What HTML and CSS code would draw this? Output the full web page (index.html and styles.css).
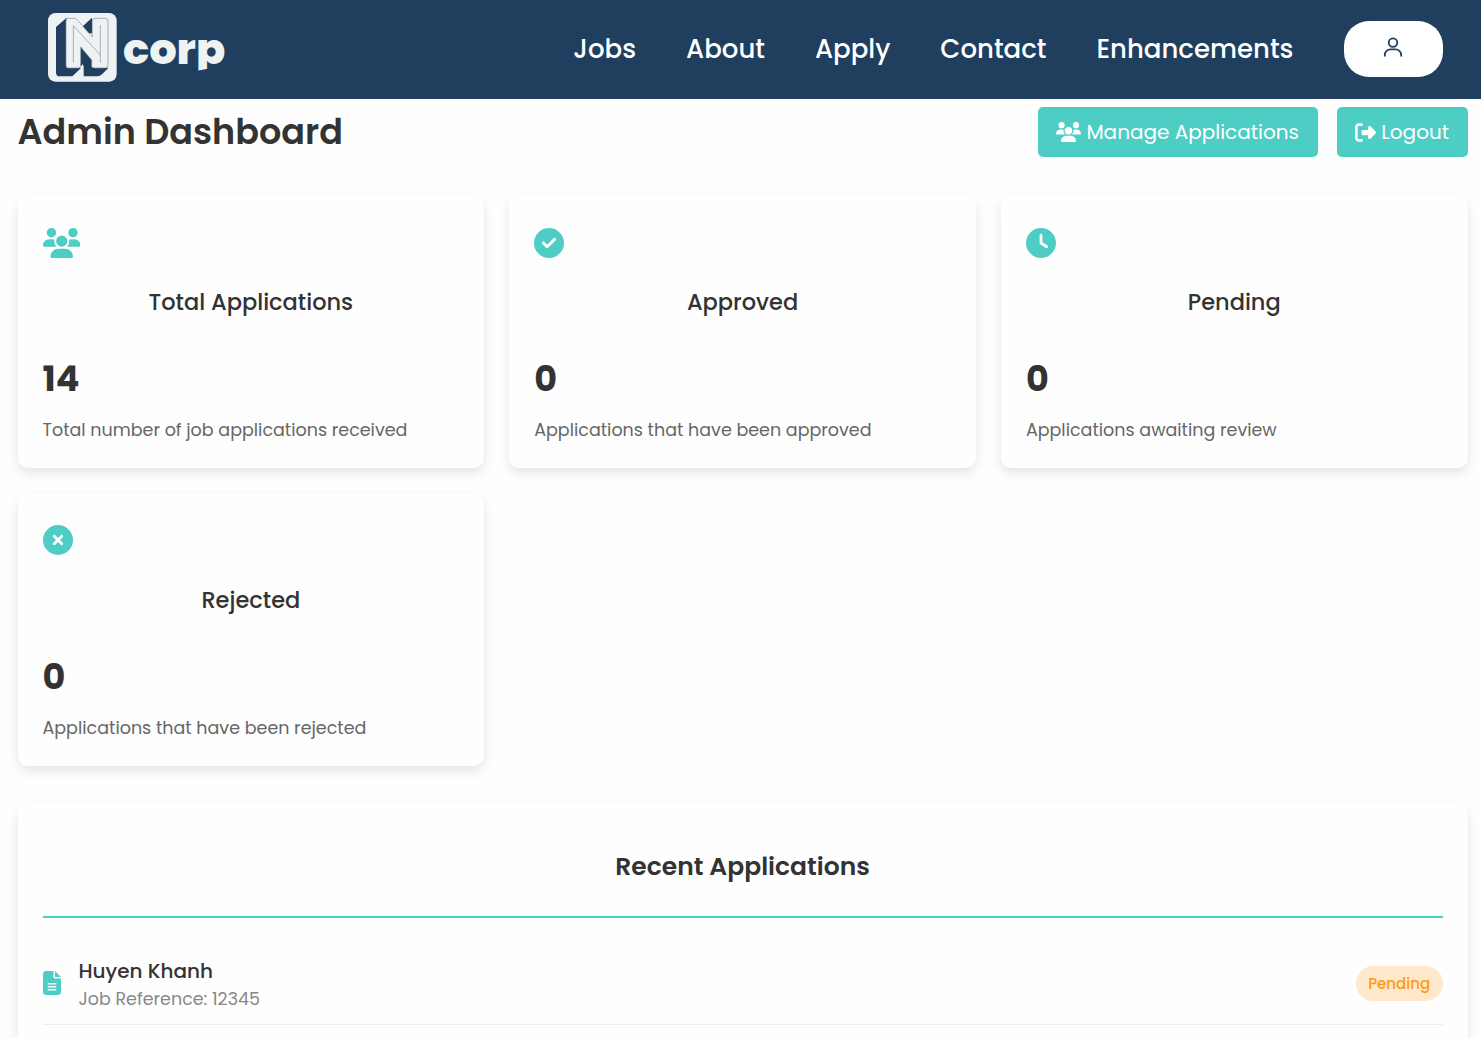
FILE: index.html
```html
<!DOCTYPE html>
<html lang="en">
<head>
<meta charset="utf-8">
<title>Admin Dashboard</title>
<link rel="stylesheet" href="styles.css">
</head>
<body>
<header class="topbar">
  <a class="logo" href="#">
    <svg class="logo-svg" viewBox="24 24 532 208" role="img" aria-label="N corp">
      <clipPath id="descender"><path d="M240 80H570V182L500 192 468 198H240Z"/></clipPath>
      <rect class="light" x="24" y="24" width="206" height="206" rx="22"/>
      <path class="dark" d="M80 38 48 66V203Q48 214 60 214H97L123 189H80ZM128 64 156 38V84L145 86ZM131 180V214H172Q180 214 186 208L205 189Z"/>
      <path class="dark" d="M120 104 160 150V189H134L128 178 120 186Z"/>
      <path class="light outline" d="M84 40H102Q107 40 111 44L157 96V48Q157 40 165 40H196Q204 40 204 48V181Q204 189 196 189H164Q158 189 155 185V165L122 126V181Q122 189 114 189H86Q78 189 78 181V48Q78 40 84 40Z"/>
      <path class="outline none" d="M100 173V62L181 150M181 60V173"/>
      <text class="logo-text" x="249" y="177" textLength="307" lengthAdjust="spacingAndGlyphs" clip-path="url(#descender)">corp</text>
    </svg>
  </a>
  <nav class="nav">
    <a href="#">Jobs</a>
    <a href="#">About</a>
    <a href="#">Apply</a>
    <a href="#">Contact</a>
    <a href="#">Enhancements</a>
  </nav>
  <a class="account" href="#" aria-label="Account">
    <svg width="20" height="20" viewBox="0 0 20 20"><circle cx="10" cy="5.6" r="4.3"/><path d="M1.8 19.5V18A5.6 5.6 0 0 1 7.4 12.4H12.6A5.6 5.6 0 0 1 18.2 18V19.5"/></svg>
  </a>
</header>
<main class="page">
  <div class="heading">
    <h1>Admin Dashboard</h1>
    <div class="actions">
      <a class="btn" href="#"><svg width="25" height="20" viewBox="0 0 640 512"><use href="#users"/></svg>Manage Applications</a>
      <a class="btn" href="#"><svg width="21" height="21" viewBox="0 0 512 512"><path d="M377.9 105.9 500.7 228.7c7.2 7.2 11.3 17.1 11.3 27.3s-4.1 20.1-11.3 27.3L377.9 406.1c-6.4 6.4-15 9.9-24 9.9c-18.7 0-33.9-15.2-33.9-33.9V320H192c-17.7 0-32-14.3-32-32v-64c0-17.7 14.3-32 32-32h128v-62.1c0-18.7 15.2-33.9 33.9-33.9c9 0 17.6 3.6 24 9.9zM160 96H96c-17.7 0-32 14.3-32 32v256c0 17.7 14.3 32 32 32h64c17.7 0 32 14.3 32 32s-14.3 32-32 32H96c-53 0-96-43-96-96V128C0 75 43 32 96 32h64c17.7 0 32 14.3 32 32s-14.3 32-32 32z"/></svg>Logout</a>
    </div>
  </div>
  <section class="stats">
    <article class="card">
      <svg class="wide" viewBox="0 0 640 512"><path id="users" d="M144 0a80 80 0 1 1 0 160A80 80 0 1 1 144 0zM512 0a80 80 0 1 1 0 160A80 80 0 1 1 512 0zM0 298.7C0 239.8 47.8 192 106.7 192h42.7c15.9 0 31 3.5 44.6 9.7c-1.3 7.2-1.9 14.7-1.9 22.3c0 38.2 16.8 72.5 43.3 96H21.3C9.6 320 0 310.4 0 298.7zM405.3 320c26.6-23.5 42.7-57.8 42.7-96c0-7.6-.7-15-1.9-22.3c13.6-6.3 28.7-9.7 44.6-9.7h42.7C592.2 192 640 239.8 640 298.7c0 11.8-9.6 21.3-21.3 21.3H405.3zM224 224a96 96 0 1 1 192 0 96 96 0 1 1-192 0zM128 485.3C128 411.7 187.7 352 261.3 352H378.7C452.3 352 512 411.7 512 485.3c0 14.7-11.9 26.7-26.7 26.7H154.7c-14.7 0-26.7-11.9-26.7-26.7z"/></svg>
      <h2>Total Applications</h2>
      <strong>14</strong>
      <p>Total number of job applications received</p>
    </article>
    <article class="card">
      <svg viewBox="0 0 512 512"><path d="M256 512A256 256 0 1 0 256 0a256 256 0 1 0 0 512zM369 209 241 337c-9.4 9.4-24.6 9.4-33.9 0l-64-64c-9.4-9.4-9.4-24.6 0-33.9s24.6-9.4 33.9 0l47 47L335 175c9.4-9.4 24.6-9.4 33.9 0s9.4 24.6 0 33.9z"/></svg>
      <h2>Approved</h2>
      <strong>0</strong>
      <p>Applications that have been approved</p>
    </article>
    <article class="card">
      <svg viewBox="0 0 512 512"><path d="M256 0a256 256 0 1 1 0 512A256 256 0 1 1 256 0zM232 120V256c0 8 4 15.5 10.7 20l96 64c11 7.4 25.9 4.4 33.3-6.7s4.4-25.9-6.7-33.3L280 243.2V120c0-13.3-10.7-24-24-24s-24 10.7-24 24z"/></svg>
      <h2>Pending</h2>
      <strong>0</strong>
      <p>Applications awaiting review</p>
    </article>
    <article class="card">
      <svg viewBox="0 0 512 512"><path d="M256 512A256 256 0 1 0 256 0a256 256 0 1 0 0 512zM175 175c9.4-9.4 24.6-9.4 33.9 0l47 47 47-47c9.4-9.4 24.6-9.4 33.9 0s9.4 24.6 0 33.9l-47 47 47 47c9.4 9.4 9.4 24.6 0 33.9s-24.6 9.4-33.9 0l-47-47-47 47c-9.4 9.4-24.6 9.4-33.9 0s-9.4-24.6 0-33.9l47-47-47-47c-9.4-9.4-9.4-24.6 0-33.9z"/></svg>
      <h2>Rejected</h2>
      <strong>0</strong>
      <p>Applications that have been rejected</p>
    </article>
  </section>
  <section class="recent">
    <h2>Recent Applications</h2>
    <div class="row">
      <svg width="18" height="24" viewBox="0 0 384 512"><path d="M64 0C28.7 0 0 28.7 0 64V448c0 35.3 28.7 64 64 64H320c35.3 0 64-28.7 64-64V160H256c-17.7 0-32-14.3-32-32V0H64zM256 0V128H384L256 0zM112 256H272c8.8 0 16 7.2 16 16s-7.2 16-16 16H112c-8.8 0-16-7.2-16-16s7.2-16 16-16zm0 64H272c8.8 0 16 7.2 16 16s-7.2 16-16 16H112c-8.8 0-16-7.2-16-16s7.2-16 16-16zm0 64H272c8.8 0 16 7.2 16 16s-7.2 16-16 16H112c-8.8 0-16-7.2-16-16s7.2-16 16-16z"/></svg>
      <div class="who">
        <h3>Huyen Khanh</h3>
        <p>Job Reference: 12345</p>
      </div>
      <span class="badge">Pending</span>
    </div>
  </section>
</main>
</body>
</html>
```
FILE: styles.css
```css
* { box-sizing: border-box; }
html { height: 100%; overflow: hidden; }
body { display: flex; flex-direction: column; height: 100%; margin: 0; overflow: hidden; background: #fefefe; color: #333; font-family: Poppins, Inter, sans-serif; }
h1, h2, h3, p { margin: 0; }
a { color: inherit; text-decoration: none; }
svg { display: block; flex: none; fill: currentColor; }

.topbar { display: flex; flex: none; align-items: center; height: 99px; padding: 0 38px 2px 48px; background: #203e5d; color: #fff; }
.logo-svg { width: 177.3px; height: 69.3px; margin-top: -2px; overflow: visible; }
.light { fill: #eef2f3; }
.dark { fill: #203e5d; }
.outline { stroke: #7d8fa3; stroke-width: 2; }
.none { fill: none; }
.logo-text { fill: #eef2f3; font: 800 128px Poppins, Lato, sans-serif; }
.nav { display: flex; gap: 50px; margin-left: auto; font-size: 26px; font-weight: 500; line-height: 40px; }
.account { display: flex; align-items: center; justify-content: center; width: 99px; height: 56px; margin-left: 50.5px; border-radius: 25px; background: #fff; color: #203e5d; }
.account svg { margin: -4px 1px 0 0; fill: none; stroke: currentColor; stroke-width: 1.8; }

.page { display: flex; flex: 1; flex-direction: column; min-height: 0; padding: 8px 13.4px 0 17.5px; }
.heading { display: flex; flex: none; justify-content: space-between; height: 50px; }
h1 { font-size: 35px; font-weight: 600; line-height: 50px; }
.actions { display: flex; gap: 19px; }
.btn { display: flex; align-items: center; gap: 5px; height: 50px; padding: 0 18.6px; border-radius: 5px; background: #4ecdc4; color: #fff; font-size: 20px; }

.stats { display: grid; flex: none; grid-template-columns: repeat(3, 1fr); gap: 25px; margin-top: 38.6px; }
.card { height: 272.7px; padding: 32px 25px 0; border-radius: 10px; background: #fefefe; box-shadow: 0 5px 12px rgba(0, 0, 0, .1); }
.card svg { width: 30px; height: 30px; color: #4ecdc4; }
.card svg.wide { width: 37.5px; }
.card h2 { margin-top: 27.4px; font-size: 22.5px; font-weight: 500; line-height: 34px; text-align: center; }
.card strong { display: block; margin-top: 33.1px; font-size: 35px; font-weight: 700; line-height: 54px; }
.card p { margin-top: 11px; color: #666; font-size: 17.5px; line-height: 27px; }

.recent { flex: 1; min-height: 0; margin-top: 38px; padding: 43px 25px 0; border-radius: 10px 10px 0 0; background: #fefefe; box-shadow: 0 5px 12px rgba(0, 0, 0, .1); }
.recent h2 { height: 71px; border-bottom: 2px solid #4ecdc4; font-size: 25px; font-weight: 600; line-height: 40px; text-align: center; }
.row { display: flex; align-items: center; height: 107px; padding-top: 25px; border-bottom: 1px solid #eee; }
.row svg { color: #4ecdc4; }
.who { flex: 1; margin-left: 18px; padding-top: 4px; }
.who h3 { font-size: 20px; font-weight: 500; line-height: 28px; }
.who p { color: #888; font-size: 17.5px; line-height: 28px; }
.badge { padding: 0 12.5px; border-radius: 18px; background: #ffe8cc; color: #ff9914; font-size: 15px; font-weight: 500; line-height: 35px; }
```
